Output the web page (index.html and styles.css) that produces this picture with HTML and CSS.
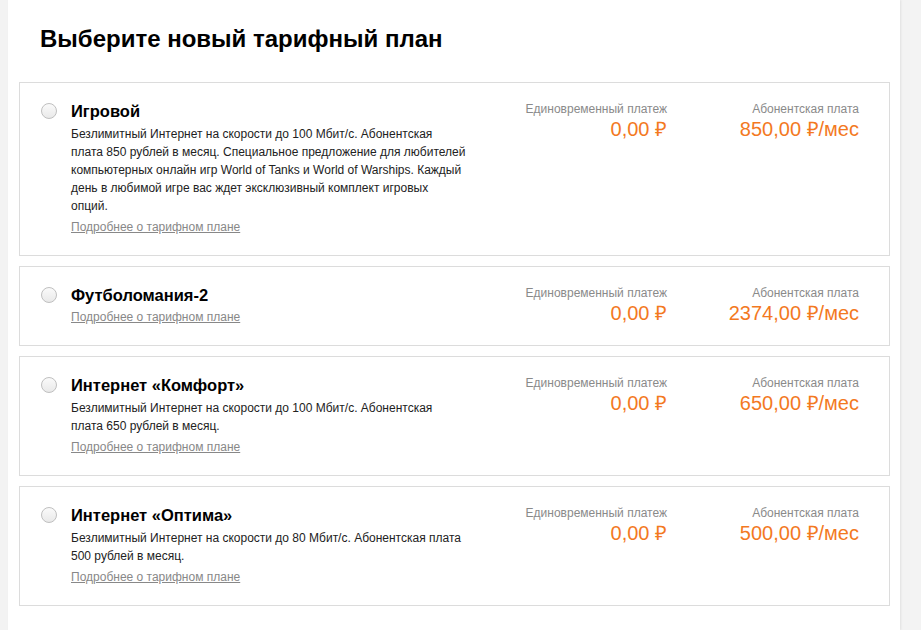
FILE: index.html
```html
<!DOCTYPE html>
<html lang="ru">
<head>
    <meta charset="UTF-8">
    <meta name="viewport" content="width=device-width, initial-scale=1.0">
    <title>Выберите новый тарифный план</title>
    <link rel="stylesheet" href="styles.css">
</head>
<body>
    <div class="page">
        <h1 class="title">Выберите новый тарифный план</h1>

        <div class="tariffs">
            <label class="tariff">
                <span class="radio"></span>
                <div class="info">
                    <div class="name">Игровой</div>
                    <p class="desc">Безлимитный Интернет на скорости до 100 Мбит/с. Абонентская плата 850 рублей в месяц. Специальное предложение для любителей компьютерных онлайн игр World of Tanks и World of Warships. Каждый день в любимой игре вас ждет эксклюзивный комплект игровых опций.</p>
                    <a class="more">Подробнее о тарифном плане</a>
                </div>
                <div class="prices">
                    <div class="price">
                        <div class="price-label">Единовременный платеж</div>
                        <div class="price-value">0,00 ₽</div>
                    </div>
                    <div class="price">
                        <div class="price-label">Абонентская плата</div>
                        <div class="price-value">850,00 ₽/мес</div>
                    </div>
                </div>
            </label>

            <label class="tariff">
                <span class="radio"></span>
                <div class="info">
                    <div class="name">Футболомания-2</div>
                    <a class="more">Подробнее о тарифном плане</a>
                </div>
                <div class="prices">
                    <div class="price">
                        <div class="price-label">Единовременный платеж</div>
                        <div class="price-value">0,00 ₽</div>
                    </div>
                    <div class="price">
                        <div class="price-label">Абонентская плата</div>
                        <div class="price-value">2374,00 ₽/мес</div>
                    </div>
                </div>
            </label>

            <label class="tariff">
                <span class="radio"></span>
                <div class="info">
                    <div class="name">Интернет «Комфорт»</div>
                    <p class="desc">Безлимитный Интернет на скорости до 100 Мбит/с. Абонентская плата 650 рублей в месяц.</p>
                    <a class="more">Подробнее о тарифном плане</a>
                </div>
                <div class="prices">
                    <div class="price">
                        <div class="price-label">Единовременный платеж</div>
                        <div class="price-value">0,00 ₽</div>
                    </div>
                    <div class="price">
                        <div class="price-label">Абонентская плата</div>
                        <div class="price-value">650,00 ₽/мес</div>
                    </div>
                </div>
            </label>

            <label class="tariff">
                <span class="radio"></span>
                <div class="info">
                    <div class="name">Интернет «Оптима»</div>
                    <p class="desc">Безлимитный Интернет на скорости до 80 Мбит/с. Абонентская плата 500 рублей в месяц.</p>
                    <a class="more">Подробнее о тарифном плане</a>
                </div>
                <div class="prices">
                    <div class="price">
                        <div class="price-label">Единовременный платеж</div>
                        <div class="price-value">0,00 ₽</div>
                    </div>
                    <div class="price">
                        <div class="price-label">Абонентская плата</div>
                        <div class="price-value">500,00 ₽/мес</div>
                    </div>
                </div>
            </label>
        </div>
    </div>
</body>
</html>
```

FILE: styles.css
```css
* {
    margin: 0;
    padding: 0;
    box-sizing: border-box;
    font-family: "Liberation Sans", Arial, Helvetica, sans-serif;
}

body {
    background: #f3f3f3;
    height: 630px;
    overflow: hidden;
}

.page {
    width: 892px;
    min-height: 630px;
    margin-left: 8px;
    padding: 0 10px 0 11px;
    background: #fff;
    box-shadow: 1px 0 2px rgba(0, 0, 0, 0.08);
}

.title {
    font-size: 24px;
    font-weight: bold;
    line-height: 28px;
    color: #000;
    padding: 25px 0 0 21px;
    margin-bottom: 29px;
}

.tariffs {
    display: flex;
    flex-direction: column;
    gap: 10px;
}

.tariff {
    display: flex;
    align-items: flex-start;
    border: 1px solid #dcdcdc;
    padding: 18px 30px 20px 21px;
    cursor: pointer;
}

.radio {
    flex: none;
    width: 16px;
    height: 16px;
    margin-top: 2px;
    border: 1px solid #bfbfbf;
    border-radius: 50%;
    background: linear-gradient(#fafafa, #e9e9e9);
}

.info {
    flex: none;
    width: 395px;
    margin-left: 14px;
}

.name {
    font-size: 16.5px;
    font-weight: bold;
    line-height: 20px;
    color: #000;
}

.desc {
    margin-top: 4px;
    font-size: 12px;
    line-height: 18px;
    color: #222;
}

.more {
    display: inline-block;
    margin-top: 4px;
    font-size: 12px;
    line-height: 16px;
    color: #888;
    text-decoration: underline;
}

.prices {
    display: flex;
    margin-left: auto;
}

.price {
    width: 192px;
    text-align: right;
}

.price-label {
    font-size: 12px;
    line-height: 16px;
    color: #8a8a8a;
}

.price-value {
    font-size: 20px;
    line-height: 24px;
    color: #f3791f;
}
```
